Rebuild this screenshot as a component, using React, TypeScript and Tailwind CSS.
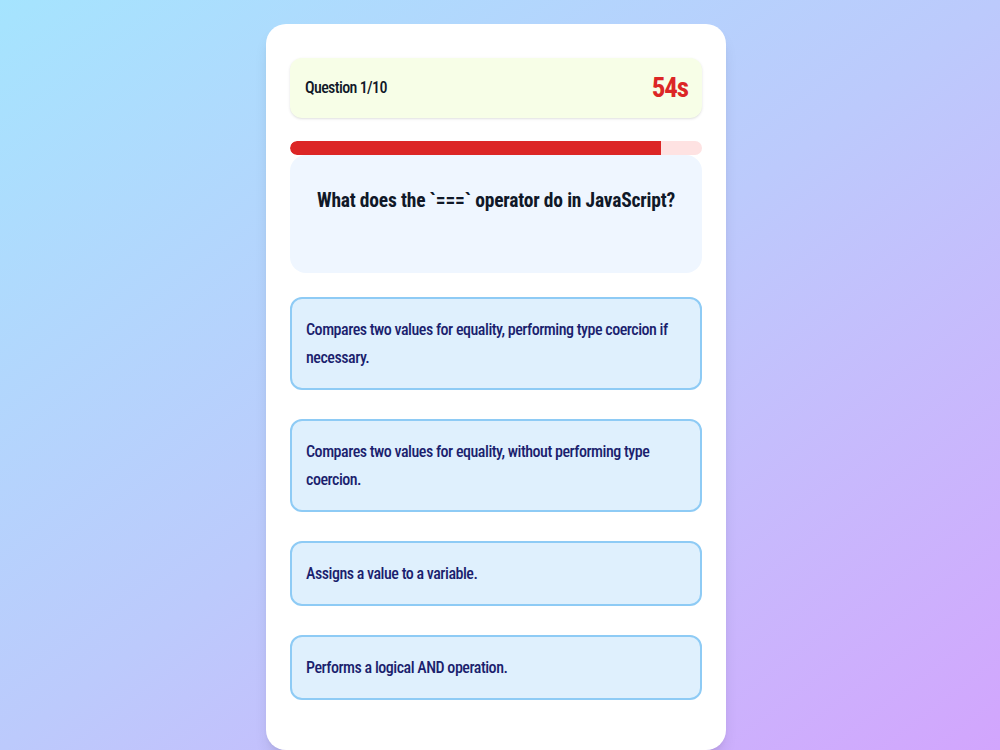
import React from 'react';

interface Question {
  text: string;
  options: string[];
}

const question: Question = {
  text: 'What does the `===` operator do in JavaScript?',
  options: [
    'Compares two values for equality, performing type coercion if necessary.',
    'Compares two values for equality, without performing type coercion.',
    'Assigns a value to a variable.',
    'Performs a logical AND operation.',
  ],
};

export default function App() {
  const timeLeft = 54;
  const total = 60;
  const pct = (timeLeft / total) * 100;

  return (
    <div className="h-screen overflow-hidden bg-gradient-to-br from-[#a5e4fe] via-[#bccafc] to-[#d2a5fd] flex justify-center pt-6 pr-2 font-['Roboto',sans-serif] [font-stretch:75%]">
      <div className="w-[460px] h-[726px] bg-white rounded-[20px] shadow-lg px-6 pt-[34px]">
        <div className="h-[60px] bg-[#f7fee7] rounded-xl shadow-sm flex items-center justify-between pl-[15px] pr-[14px]">
          <span className="text-base font-medium tracking-[-0.04em] text-gray-900">Question 1/10</span>
          <span className="text-[27px] font-bold tracking-[-0.04em] text-[#dc2626]">{timeLeft}s</span>
        </div>

        <div className="mt-[23px] h-[14px] rounded-full bg-[#fee2e2] overflow-hidden">
          <div className="h-full bg-[#dc2626] rounded-l-full" style={{ width: `${pct}%` }} />
        </div>

        <div className="bg-[#eff6ff] rounded-2xl px-3 pt-8 pb-[58px]">
          <h2 className="text-[19.5px] font-bold tracking-[-0.01em] text-gray-900 text-center leading-7">{question.text}</h2>
        </div>

        <div className="mt-6 flex flex-col gap-[29px]">
          {question.options.map((opt) => (
            <button
              key={opt}
              className="text-left bg-[#dff0fd] border-2 border-[#8ecbf5] rounded-xl px-[14px] py-[16.5px] text-base font-medium tracking-[-0.03em] leading-7 text-[#1b1f6e]"
            >
              {opt}
            </button>
          ))}
        </div>
      </div>
    </div>
  );
}
